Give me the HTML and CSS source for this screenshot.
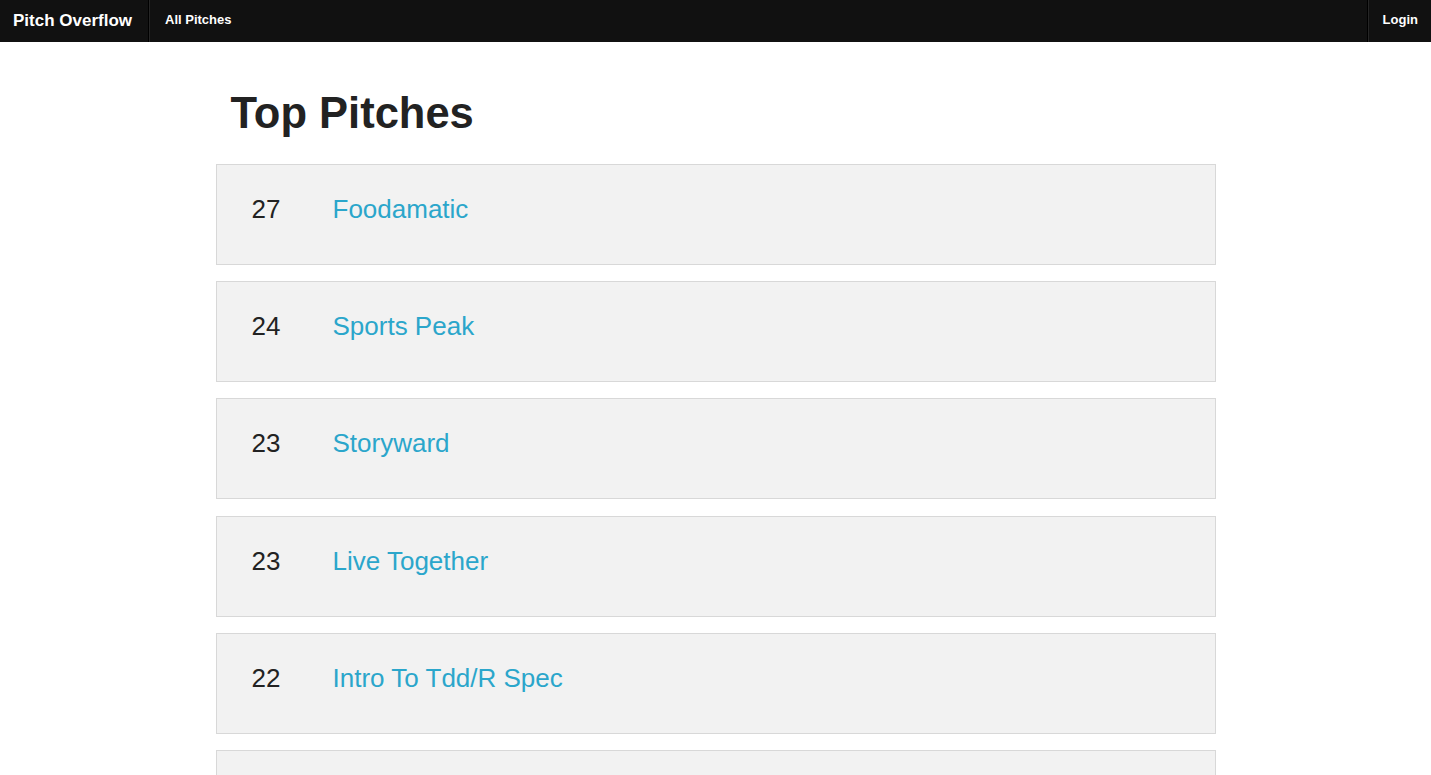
FILE: index.html
```html
<!DOCTYPE html>
<html lang="en">
<head>
<meta charset="utf-8">
<title>Pitch Overflow</title>
<link rel="stylesheet" href="styles.css">
</head>
<body>
<nav class="top-bar">
  <a class="brand" href="#">Pitch Overflow</a>
  <span class="divider"></span>
  <a class="nav-link" href="#">All Pitches</a>
  <span class="spacer"></span>
  <span class="divider"></span>
  <a class="nav-link login" href="#">Login</a>
</nav>
<main class="container">
  <h1 class="page-title">Top Pitches</h1>
  <ul class="pitch-list">
    <li class="pitch"><span class="votes">27</span><a class="pitch-name" href="#">Foodamatic</a></li>
    <li class="pitch"><span class="votes">24</span><a class="pitch-name" href="#">Sports Peak</a></li>
    <li class="pitch"><span class="votes">23</span><a class="pitch-name" href="#">Storyward</a></li>
    <li class="pitch"><span class="votes">23</span><a class="pitch-name" href="#">Live Together</a></li>
    <li class="pitch"><span class="votes">22</span><a class="pitch-name" href="#">Intro To Tdd/R Spec</a></li>
    <li class="pitch"></li>
  </ul>
</main>
</body>
</html>
```

FILE: styles.css
```css
* { box-sizing: border-box; }
html, body { margin: 0; padding: 0; }
body {
  font-family: "Liberation Sans", Arial, Helvetica, sans-serif;
  background: #ffffff;
  color: #222222;
}
a { text-decoration: none; }

.top-bar {
  display: flex;
  align-items: stretch;
  height: 42px;
  background: #111111;
}
.brand {
  font-size: 17px;
  font-weight: bold;
  line-height: 42px;
  color: #ffffff;
  padding: 0 16px 0 13px;
}
.divider {
  width: 2px;
  border-left: 1px solid #000000;
  border-right: 1px solid #262626;
}
.nav-link {
  font-size: 13px;
  font-weight: bold;
  line-height: 40px;
  color: #ffffff;
  padding: 0 14px 0 15px;
}
.login { padding: 0 13px 0 14px; }
.spacer { flex: 1; }

.container {
  width: 1000px;
  margin: 0 auto;
  padding-top: 50px;
}
.page-title {
  margin: 0 0 30px;
  padding-left: 15px;
  font-size: 43.5px;
  line-height: 42px;
  font-weight: bold;
  color: #222222;
}
.pitch-list {
  list-style: none;
  margin: 0;
  padding: 0;
}
.pitch {
  display: flex;
  height: 101px;
  margin-bottom: 16.2px;
  padding: 29px 0 0 35px;
  background: #f2f2f2;
  border: 1px solid #d8d8d8;
  font-size: 26px;
  line-height: 30px;
}
.votes {
  width: 81px;
  color: #222222;
}
.pitch-name {
  color: #2ba6cb;
}
```
